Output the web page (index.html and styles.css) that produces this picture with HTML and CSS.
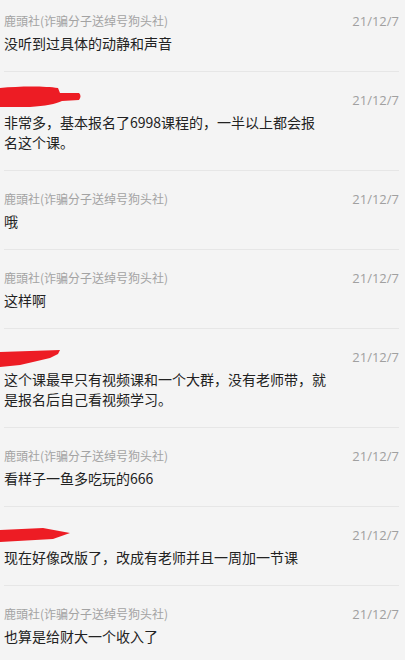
FILE: index.html
```html
<!DOCTYPE html>
<html lang="zh-CN">
<head>
<meta charset="utf-8">
<title>评论</title>
<link rel="stylesheet" href="styles.css">
</head>
<body>
<div class="list">
  <div class="item first">
    <div class="head"><span class="name">鹿頭社(诈骗分子送绰号狗头社)</span><span class="date">21/12/7</span></div>
    <p class="text">没听到过具体的动静和声音</p>
  </div>
  <div class="item">
    <div class="head"><span class="name redacted"><svg class="ink ink-a" width="82" height="22" viewBox="0 0 82 22"><path d="M0,2 C20,0 45,0 58,2 L60,7 L79,7 Q82,10 79,14 L62,15 C56,18 45,20 30,21 L0,21 Z" fill="#ed1c24"/></svg></span><span class="date">21/12/7</span></div>
    <p class="text">非常多，基本报名了6998课程的，一半以上都会报名这个课。</p>
  </div>
  <div class="item">
    <div class="head"><span class="name">鹿頭社(诈骗分子送绰号狗头社)</span><span class="date">21/12/7</span></div>
    <p class="text">哦</p>
  </div>
  <div class="item">
    <div class="head"><span class="name">鹿頭社(诈骗分子送绰号狗头社)</span><span class="date">21/12/7</span></div>
    <p class="text">这样啊</p>
  </div>
  <div class="item">
    <div class="head"><span class="name redacted"><svg class="ink ink-b" width="62" height="18" viewBox="0 0 62 18"><path d="M0,2 L60,0 L58,4 L50,8 L33,12 L20,15 L0,17 Z" fill="#ed1c24"/></svg></span><span class="date">21/12/7</span></div>
    <p class="text">这个课最早只有视频课和一个大群，没有老师带，就是报名后自己看视频学习。</p>
  </div>
  <div class="item">
    <div class="head"><span class="name">鹿頭社(诈骗分子送绰号狗头社)</span><span class="date">21/12/7</span></div>
    <p class="text">看样子一鱼多吃玩的666</p>
  </div>
  <div class="item">
    <div class="head"><span class="name redacted"><svg class="ink ink-c" width="72" height="16" viewBox="0 0 72 16"><path d="M0,2 L43,0 L70,5 L53,11 L0,14 Z" fill="#ed1c24"/></svg></span><span class="date">21/12/7</span></div>
    <p class="text">现在好像改版了，改成有老师并且一周加一节课</p>
  </div>
  <div class="item">
    <div class="head"><span class="name">鹿頭社(诈骗分子送绰号狗头社)</span><span class="date">21/12/7</span></div>
    <p class="text">也算是给财大一个收入了</p>
  </div>
</div>
</body>
</html>
```
FILE: styles.css
```css
html, body {
  margin: 0;
  padding: 0;
  background: #f4f4f4;
}
body {
  font-family: "Noto Sans CJK SC", "Noto Sans", sans-serif;
  color: #222;
}
.list {
  display: flex;
  flex-direction: column;
}
.item {
  margin: 0 6px 0 4px;
  padding: 18px 0 18px;
  border-bottom: 1px solid #e6e6e6;
}
.item.first {
  padding-top: 11px;
}
.head {
  display: flex;
  justify-content: space-between;
  align-items: center;
  height: 20px;
}
.name {
  font-size: 12px;
  line-height: 20px;
  color: #a3a3a3;
}
.redacted {
  position: relative;
  width: 80px;
  height: 20px;
}
.ink {
  position: absolute;
  left: -4px;
  display: block;
}
.ink-a { top: -4px; }
.ink-b { top: 3px; }
.ink-c { top: 3px; }
.date {
  font-family: "Open Sans", "Liberation Sans", sans-serif;
  font-size: 13px;
  line-height: 20px;
  color: #a0a0a0;
}
.text {
  margin: 2px 0 0;
  max-width: 323px;
  font-size: 14px;
  line-height: 20px;
  color: #222;
}
```
